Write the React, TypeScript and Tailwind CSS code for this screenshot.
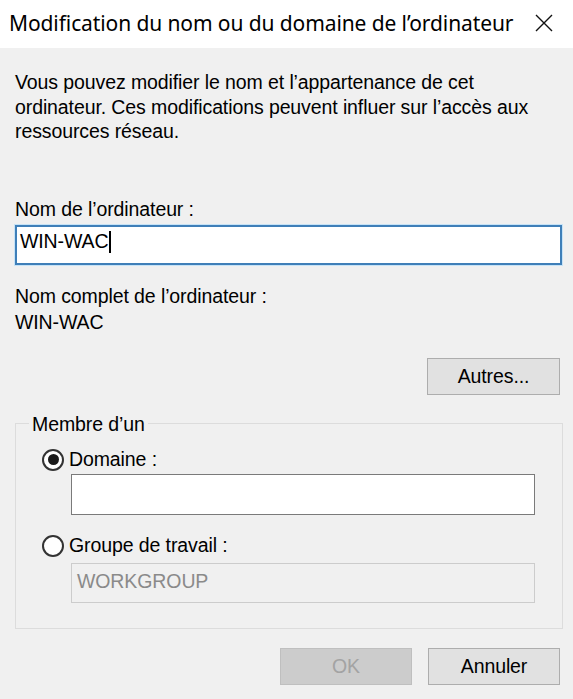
import React from 'react'

const body = "font-['Liberation_Sans',Arial,sans-serif] text-[19.5px] tracking-[-0.1px] text-black"

function Radio({ checked, label }: { checked?: boolean; label: string }) {
  return (
    <div className="flex h-[26px] items-center gap-[5px]">
      <span className="flex h-[22px] w-[22px] items-center justify-center rounded-full border-2 border-[#333333] bg-white">
        {checked && <span className="h-[11px] w-[11px] rounded-full bg-[#1a1a1a]" />}
      </span>
      <span>{label}</span>
    </div>
  )
}

export default function App() {
  return (
    <div className="h-[699px] w-[573px] overflow-hidden bg-[#f0f0f0]">
      {/* title bar */}
      <div className="flex h-[48px] items-center justify-between bg-white pl-[9px] pr-[20px]">
        <span className="font-['Noto_Sans',sans-serif] text-[21px] tracking-[-0.1px] text-black">
          Modification du nom ou du domaine de l’ordinateur
        </span>
        <svg width="18" height="18" viewBox="0 0 18 18" className="mb-[2px]">
          <path d="M1 1 L17 17 M17 1 L1 17" stroke="#111" strokeWidth="1.4" fill="none" />
        </svg>
      </div>

      <div className={`${body} flex flex-col pl-[15px] pr-[11px] pt-[22px] leading-[24.5px]`}>
        <p>
          Vous pouvez modifier le nom et l’appartenance de cet
          <br />
          ordinateur. Ces modifications peuvent influer sur l’accès aux
          <br />
          ressources réseau.
        </p>

        <div className="mt-[53px] leading-[24px]">Nom de l’ordinateur :</div>
        <div className="mt-[4px] flex h-[40px] items-center border-2 border-[#3f7fb8] bg-white pb-[6px] pl-[3px] shadow-[0_0_0_1px_#c6e3f7]">
          <span>WIN-WAC</span>
          <span className="ml-[1px] h-[22px] w-[1.5px] bg-black" />
        </div>

        <div className="mt-[19px] leading-[24px]">Nom complet de l’ordinateur :</div>
        <div className="mt-[2px] leading-[24px]">WIN-WAC</div>

        <button className="mr-[2px] mt-[24px] h-[37px] w-[133px] self-end border border-[#adadad] bg-[#e1e1e1]">
          Autres...
        </button>

        <fieldset className="mr-[-1px] mt-[17px] h-[217px] border border-[#dcdcdc] px-[13px]">
          <legend className="px-[3px] leading-[24px]">Membre d’un</legend>
          <div className="ml-[13px] mt-[11px]">
            <Radio checked label="Domaine :" />
            <div className="ml-[29px] mr-[14px] mt-[1px] h-[41px] border border-[#7a7a7a] bg-white" />
            <div className="mt-[18px]">
              <Radio label="Groupe de travail :" />
            </div>
            <div className="ml-[29px] mr-[14px] mt-[4px] flex h-[40px] items-center border border-[#cccccc] bg-[#f0f0f0] pb-[3px] pl-[5px] text-[#8a8a8a]">
              WORKGROUP
            </div>
          </div>
        </fieldset>

        <div className="mr-[2px] mt-[19px] flex justify-end gap-[16px]">
          <button className="h-[37px] w-[132px] border border-[#bfbfbf] bg-[#cccccc] text-[#a3a3a3]">OK</button>
          <button className="h-[37px] w-[132px] border border-[#adadad] bg-[#e1e1e1]">Annuler</button>
        </div>
      </div>
    </div>
  )
}
